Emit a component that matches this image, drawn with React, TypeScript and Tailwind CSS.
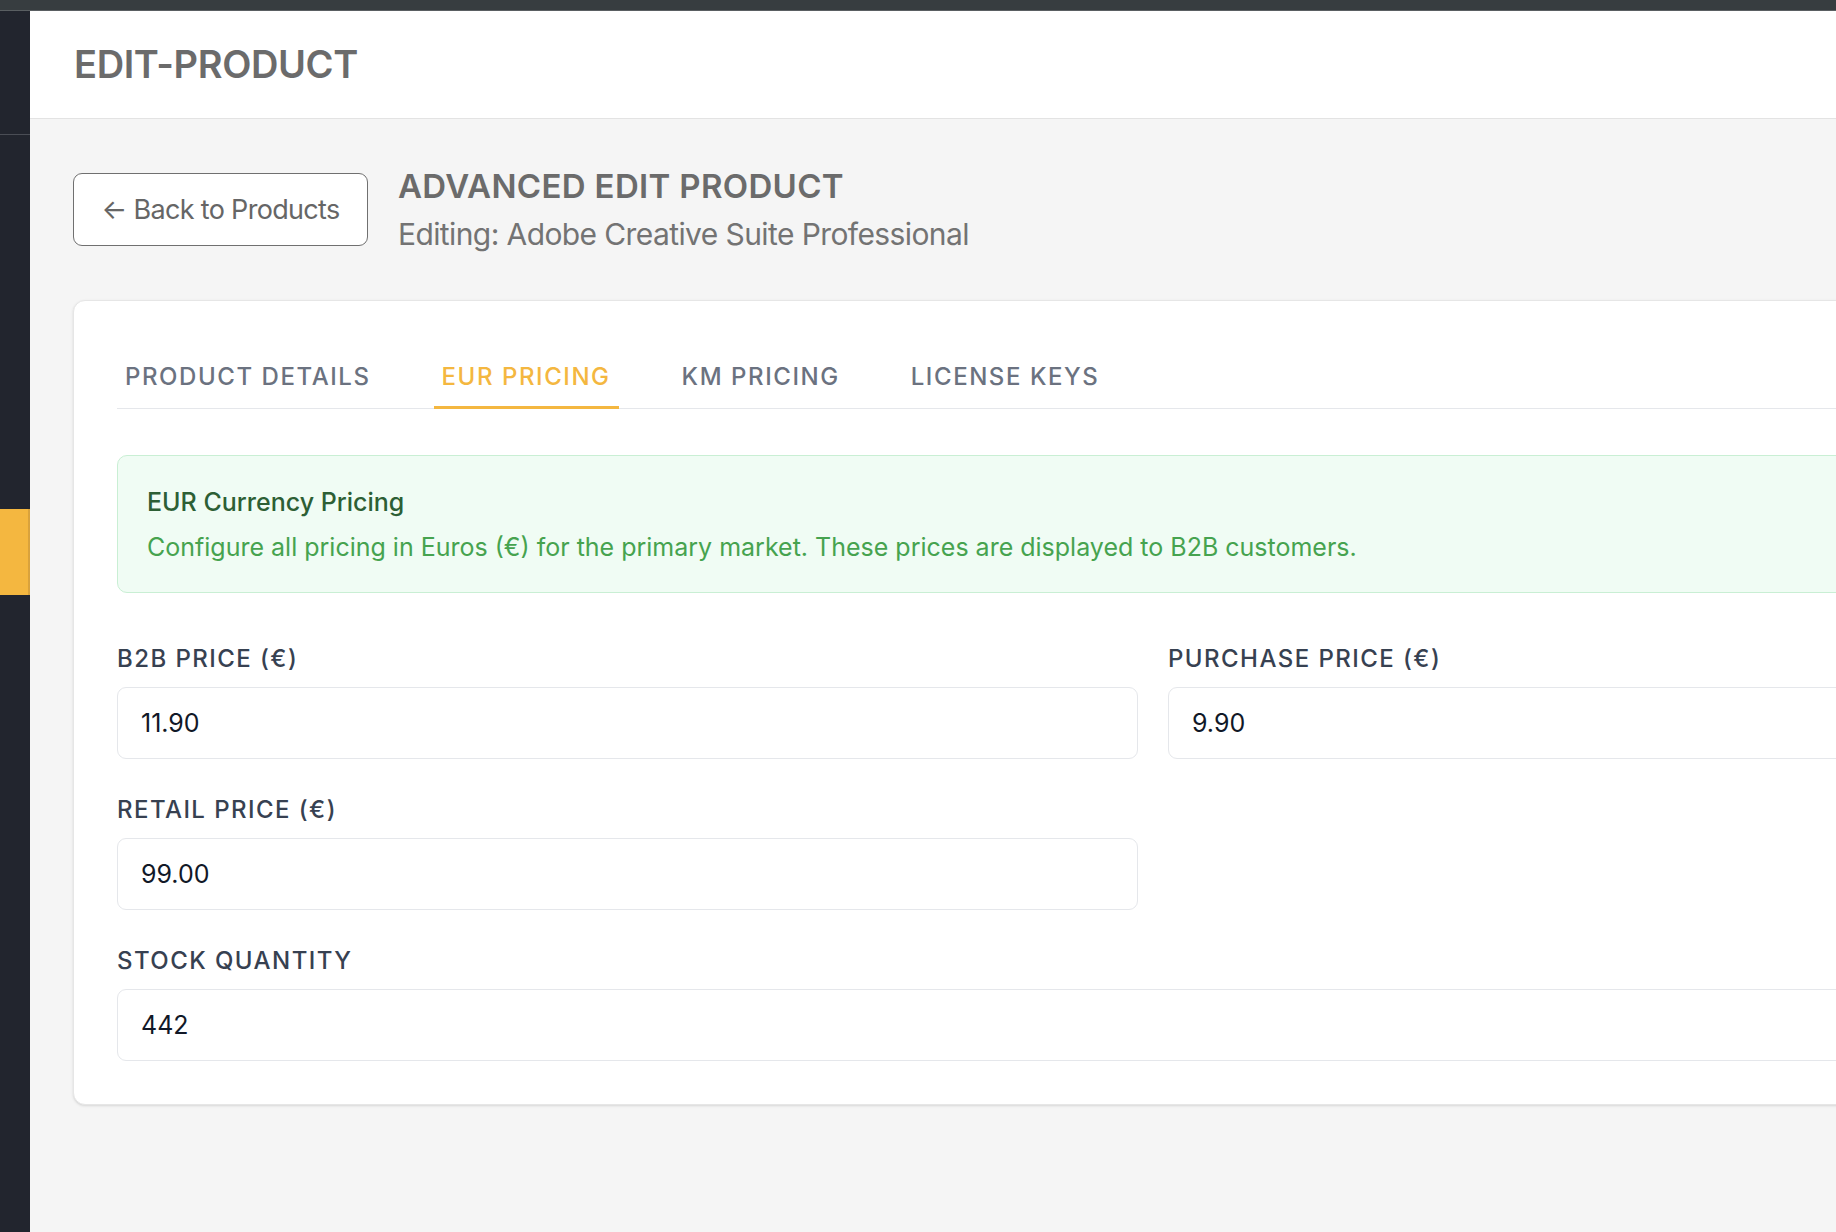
const tabs = ["Product Details", "EUR Pricing", "KM Pricing", "License Keys"];

const Field = ({label, value, className = ""}: {label: string; value: string; className?: string}) => {
  return (
    <div className={className}>
      <label className="block text-[24px] leading-[30px] font-medium tracking-[0.06em] uppercase text-[#374151] mb-[13px]">{label}</label>
      <input
        defaultValue={value}
        readOnly
        className="block w-full h-[72px] rounded-[9px] border border-[#e5e7eb] bg-white px-[23px] text-[25px] text-[#111827] outline-none"
      />
    </div>
  );
};

const App = () => {
  const active = 1;

  return (
    <div className="flex flex-col w-[1836px] h-[1232px] overflow-hidden bg-[#f5f5f5] font-['Inter',sans-serif]">
      <div className="h-[11px] shrink-0 bg-[#373d40] border-b border-[#5a5f62]" />

      <div className="flex flex-1 min-h-0">
        {/* sidebar */}
        <aside className="w-[30px] shrink-0 bg-[#22252e] flex flex-col">
          <div className="h-[124px] border-b border-[#4a4d55]" />
          <div className="mt-[374px] h-[86px] bg-[#f4b740] border-r-2 border-[#d9a23c]" />
        </aside>

        <main className="flex-1 min-w-0 flex flex-col overflow-hidden">
          <header className="h-[108px] shrink-0 bg-white border-b border-[#e3e3e3] flex items-center px-[44px]">
            <h1 className="text-[38px] font-semibold tracking-[-0.01em] text-[#6b6b6b]">EDIT-PRODUCT</h1>
          </header>

          <section className="px-[43px] pt-[49px]">
            <div className="flex items-start gap-[30px] mb-[48px]">
              <button className="mt-[5px] flex items-center justify-center pt-[2px] w-[295px] h-[73px] rounded-[9px] border border-[#707070] bg-white text-[27px] tracking-[-0.025em] text-[#666666]">
                ← Back to Products
              </button>
              <div>
                <h2 className="text-[33px] leading-[36px] font-semibold tracking-[0.01em] text-[#6b6b6b]">ADVANCED EDIT PRODUCT</h2>
                <p className="mt-[12px] text-[30px] leading-[36px] tracking-[-0.02em] text-[#737373]">Editing: Adobe Creative Suite Professional</p>
              </div>
            </div>

            {/* card */}
            <div className="w-[2160px] rounded-[12px] border border-[#e6e6e6] bg-white shadow-sm p-[43px]">
              <div className="flex gap-[55px] border-b border-[#e5e7eb]">
                {tabs.map((t, i) => (
                  <div
                    key={t}
                    className={
                      i === active
                        ? "h-[65px] -mb-px flex items-center pt-[4px] px-[8px] border-b-[3px] border-[#f4b740] text-[24px] font-medium tracking-[0.065em] uppercase text-[#f4b740]"
                        : "h-[65px] -mb-px flex items-center pt-[4px] px-[8px] border-b-[3px] border-transparent text-[24px] font-medium tracking-[0.065em] uppercase text-[#6b7280]"
                    }
                  >
                    {t}
                  </div>
                ))}
              </div>

              <div className="mt-[46px] rounded-[10px] border border-[#c9efd4] bg-[#f0fcf4] px-[29px] pt-[28px] pb-[27px]">
                <h3 className="text-[25px] leading-[36px] font-medium text-[#2d5f35] mb-[9px]">EUR Currency Pricing</h3>
                <p className="text-[25px] leading-[36px] text-[#46a34f]">
                  Configure all pricing in Euros (€) for the primary market. These prices are displayed to B2B customers.
                </p>
              </div>

              <div className="mt-[51px] grid grid-cols-2 gap-x-[30px] gap-y-[36px]">
                <Field label="B2B Price (€)" value="11.90" />
                <Field label="Purchase Price (€)" value="9.90" />
                <Field label="Retail Price (€)" value="99.00" />
                <div />
                <Field label="Stock Quantity" value="442" className="col-span-2" />
              </div>
            </div>
          </section>
        </main>
      </div>
    </div>
  );
};

export default App;
